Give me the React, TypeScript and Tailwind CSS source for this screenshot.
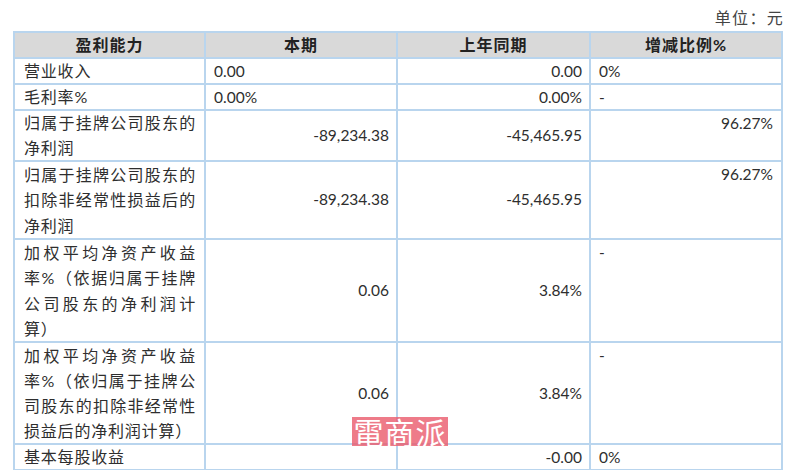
import React from "react";

const latin = "font-['Lato','Noto_Sans_CJK_SC',sans-serif]";

interface Row {
  lines: string[];
  current: string;
  previous: string;
  change: string;
  height: string;
  leading: string;
  currentLeft?: boolean;
  changeRight?: boolean;
}

const rows: Row[] = [
  { lines: ["营业收入"], current: "0.00", previous: "0.00", change: "0%", height: "h-[26px]", leading: "leading-[24px]", currentLeft: true },
  { lines: ["毛利率%"], current: "0.00%", previous: "0.00%", change: "-", height: "h-[26px]", leading: "leading-[24px]", currentLeft: true },
  { lines: ["归属于挂牌公司股东的", "净利润"], current: "-89,234.38", previous: "-45,465.95", change: "96.27%", height: "h-[51px]", leading: "leading-[24.5px]", changeRight: true },
  { lines: ["归属于挂牌公司股东的", "扣除非经常性损益后的", "净利润"], current: "-89,234.38", previous: "-45,465.95", change: "96.27%", height: "h-[78px]", leading: "leading-[25.3px]", changeRight: true },
  { lines: ["加权平均净资产收益", "率%（依据归属于挂牌", "公司股东的净利润计", "算）"], current: "0.06", previous: "3.84%", change: "-", height: "h-[103px]", leading: "leading-[25.25px]" },
  { lines: ["加权平均净资产收益", "率%（依归属于挂牌公", "司股东的扣除非经常性", "损益后的净利润计算）"], current: "0.06", previous: "3.84%", change: "-", height: "h-[102px]", leading: "leading-[25px]" },
  { lines: ["基本每股收益"], current: "", previous: "-0.00", change: "0%", height: "h-[26px]", leading: "leading-[24px]" },
];

export default function App() {
  return (
    <div className={`relative w-[800px] h-[470px] overflow-hidden bg-white text-[#2e2e2e] ${latin}`}>
      {/* 单位 */}
      <div className="h-[31px] pr-[16px] pt-[8px] text-right text-[16px] leading-[20px] tracking-[1.3px] text-[#444]">
        单位：元
      </div>

      {/* 表格 */}
      <div className="pl-[13px]">
        <table className="w-[768px] table-fixed border-collapse text-[15.5px]">
          <colgroup>
            <col className="w-[191px]" />
            <col className="w-[192px]" />
            <col className="w-[193px]" />
            <col className="w-[192px]" />
          </colgroup>
          <thead>
            <tr className="h-[26px] bg-[#d9d9d9] text-[16px] leading-[24px] tracking-[1px] text-[#222]">
              <th className="border-2 border-[#b9d5ee] p-0 text-center font-bold">盈利能力</th>
              <th className="border-2 border-[#b9d5ee] p-0 text-center font-bold">本期</th>
              <th className="border-2 border-[#b9d5ee] p-0 text-center font-bold">上年同期</th>
              <th className="border-2 border-[#b9d5ee] p-0 text-center font-bold">增减比例%</th>
            </tr>
          </thead>
          <tbody>
            {rows.map((row, i) => (
              <tr key={i} className={`${row.height} ${row.leading}`}>
                <td className="border-2 border-[#b9d5ee] py-0 pl-[9px] pr-[8px] align-top text-[16px] tracking-[0.8px]">
                  {row.lines.map((line, j) => (
                    <div
                      key={j}
                      className={j < row.lines.length - 1 ? "text-justify [text-align-last:justify]" : "text-left"}
                    >
                      {line}
                    </div>
                  ))}
                </td>
                <td
                  className={`border-2 border-[#b9d5ee] py-0 ${
                    row.currentLeft ? "pl-[8px] text-left" : "pr-[7px] text-right"
                  }`}
                >
                  {row.current}
                </td>
                <td className="border-2 border-[#b9d5ee] py-0 pr-[7px] text-right">{row.previous}</td>
                <td
                  className={`border-2 border-[#b9d5ee] py-0 align-top ${
                    row.changeRight ? "pr-[8px] text-right" : "pl-[8px] text-left"
                  }`}
                >
                  {row.change}
                </td>
              </tr>
            ))}
          </tbody>
        </table>
      </div>

      {/* 水印 */}
      <div className="absolute left-[352px] top-[417px] flex h-[29px] w-[96px] items-center justify-center bg-[#ea5a6b]/80 text-[30px] leading-[29px] font-normal tracking-[1px] text-white font-['Noto_Sans_CJK_TC',sans-serif]">
        電商派
      </div>
    </div>
  );
}
